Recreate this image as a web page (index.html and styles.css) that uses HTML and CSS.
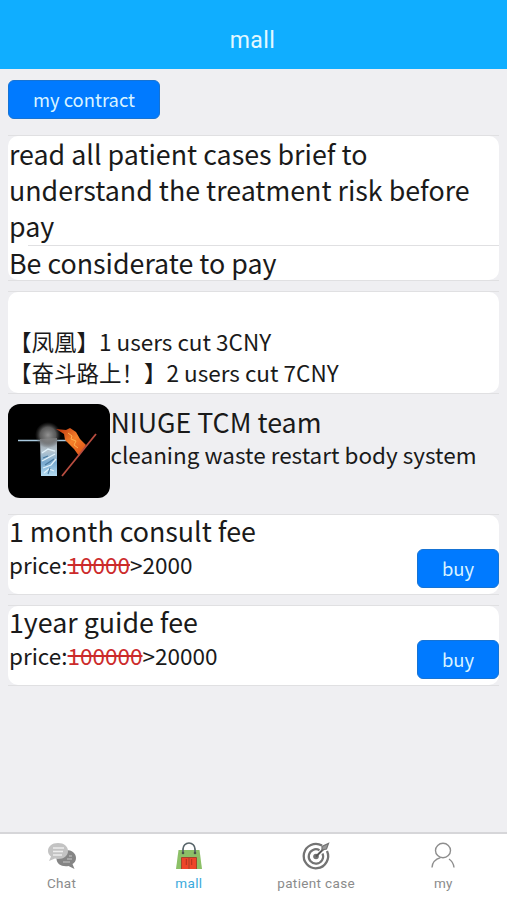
FILE: index.html
```
<!DOCTYPE html>
<html lang="en">
<head>
  <meta charset="UTF-8" />
  <title>mall</title>
  <meta name="viewport" content="width=device-width, initial-scale=1" />
  <link rel="stylesheet" href="styles.css">
</head>
<body>
  <header class="topbar">
    <h1>mall</h1>
  </header>

  <main class="content">
    <button class="btn contract">my contract</button>

    <div class="card">
      <div class="card-body notice">
        <p>read all patient cases brief to understand the treatment risk before pay</p>
        <p class="divided">Be considerate to pay</p>
      </div>
    </div>

    <div class="card">
      <div class="card-body cuts">
        <p>【凤凰】1 users cut 3CNY</p>
        <p>【奋斗路上！】2 users cut 7CNY</p>
      </div>
    </div>

    <div class="team">
      <svg class="logo" viewBox="0 0 102 94">
        <defs>
          <linearGradient id="ice" x1="0" y1="0" x2="0" y2="1">
            <stop offset="0" stop-color="#8b8f94" />
            <stop offset=".35" stop-color="#b5c5d0" />
            <stop offset=".65" stop-color="#78a9cf" />
            <stop offset="1" stop-color="#b5dcf2" />
          </linearGradient>
          <radialGradient id="smoke">
            <stop offset="0" stop-color="#929292" />
            <stop offset=".6" stop-color="#707070" stop-opacity=".8" />
            <stop offset="1" stop-color="#444" stop-opacity="0" />
          </radialGradient>
          <linearGradient id="fire" x1="0" y1="0" x2="1" y2="1">
            <stop offset="0" stop-color="#b92e0c" />
            <stop offset=".5" stop-color="#f6812a" />
            <stop offset="1" stop-color="#dc4a12" />
          </linearGradient>
        </defs>
        <rect width="102" height="94" rx="12" fill="#000" />
        <path d="M10 36.500H61" stroke="#a9c9df" stroke-width="1.600" />
        <path d="M32 35l17-1v38H33z" fill="url(#ice)" />
        <path d="M34 49l6-4 7 2M34 57l13-7M35 64l8-3 5-6M36 69l5-4 5 2" fill="none" stroke="#e1f2fb" stroke-width="1.300" />
        <path d="M35 54l5-2M37 61l9-6M40 70l2-6" stroke="#4a7ba1" stroke-width="1.100" />
        <ellipse cx="40" cy="31" rx="13" ry="13" fill="url(#smoke)" />
        <path d="M48 25l10 1 4-2 6 4 4 7 6 6-7 11-5-7-5-5-4-4-1-6z" fill="url(#fire)" />
        <path d="M60 29l4 3-1 3 5 2-2 4 4 3" fill="none" stroke="#ffb04e" stroke-width="1" />
        <path d="M54 72L88 30" stroke="#b84d40" stroke-width="1.800" />
      </svg>
      <div class="team-info">
        <h2>NIUGE TCM team</h2>
        <p>cleaning waste restart body system</p>
      </div>
    </div>

    <div class="card">
      <div class="card-body product">
        <div>
          <h2>1 month consult fee</h2>
          <p>price:<del>10000</del>&gt;2000</p>
        </div>
        <button class="btn buy">buy</button>
      </div>
    </div>

    <div class="card">
      <div class="card-body product">
        <div>
          <h2>1year guide fee</h2>
          <p>price:<del>100000</del>&gt;20000</p>
        </div>
        <button class="btn buy">buy</button>
      </div>
    </div>
  </main>

  <nav class="tabbar">
    <a class="tab">
      <svg viewBox="0 0 30 30">
        <path d="M19 9c6 0 10 3.500 10 8 0 3-1.500 5-3.500 6l2 5-6-3c-7 1-12-2-12-7.500C9.500 12 13 9 19 9z" fill="#858585" />
        <path d="M11 2c6 0 10 3.500 10 8s-4 8-10 8c-1 0-2-.1-3-.4L2 20l2-4.500C2 14 1 12 1 10c0-4.500 4-8 10-8z" fill="#c3c3c3" />
        <path d="M6 7h11M6 10.500h10M6 14h9" stroke="#ededed" stroke-width="1.300" />
        <path d="M22 15h3M20 18h5M16 21h7" stroke="#c8c8c8" stroke-width="1.200" />
      </svg>
      <span>Chat</span>
    </a>
    <a class="tab active">
      <svg viewBox="0 0 30 30">
        <path d="M4.500 9h21l2.500 19H2z" fill="#8cc067" />
        <path d="M7.500 16.500h15V28h-15z" fill="#ee4529" />
        <path d="M7.500 28V16.500h15V28M15 17v11" fill="none" stroke="#a3452b" stroke-width="1" />
        <path d="M12.300 18v6M17.700 18v6" stroke="#a92f1d" stroke-width=".9" />
        <path d="M9 12V8a6 6 0 0 1 12 0v4" fill="none" stroke="#58656a" stroke-width="1.700" />
        <circle cx="9" cy="12" r="1.300" fill="#465348" />
        <circle cx="21" cy="12" r="1.300" fill="#465348" />
      </svg>
      <span>mall</span>
    </a>
    <a class="tab">
      <svg viewBox="0 0 30 30" fill="none" stroke="#737373">
        <path d="M21 4.500A12.200 12.200 0 1 0 26 10" stroke-width="2.300" />
        <path d="M18.500 9.200A7.200 7.200 0 1 0 21.500 12.500" stroke-width="2.200" />
        <circle cx="15" cy="15.500" r="2.800" fill="#737373" stroke="none" />
        <path d="M15 15.500L25 5.500" stroke="#555" stroke-width="2" />
        <path d="M21 9V5.500L27.500 2.500 25.500 8z" fill="#999" stroke-width="1.200" />
      </svg>
      <span>patient case</span>
    </a>
    <a class="tab">
      <svg viewBox="0 0 30 30" fill="none" stroke="#8e8e8e" stroke-width="1.400">
        <ellipse cx="15" cy="9.500" rx="7.500" ry="7.200" />
        <path d="M4 26.500c.3-5 3.500-8.300 8.500-9.800M21 18c2.700 1.700 4.500 4.500 5 8.500" />
      </svg>
      <span>my</span>
    </a>
  </nav>
</body>
</html>
```
FILE: styles.css
```
:root {
  --accent: #10aeff;
  --primary: #007aff;
  --bg: #efeff2;
  --line: #e0e0e2;
}

* {
  box-sizing: border-box;
  margin: 0;
  padding: 0;
}

body {
  display: flex;
  flex-direction: column;
  height: 100vh;
  overflow: hidden;
  background: var(--bg);
  color: #1a1a1a;
  font-family: "Noto Sans CJK SC", sans-serif;
}

.topbar {
  height: 69px;
  padding-top: 24px;
  background: var(--accent);
  color: #e3f8ff;
  text-align: center;
}

.topbar h1 {
  padding-right: 2px;
  font-family: Roboto, sans-serif;
  font-size: 23px;
  line-height: 34px;
  font-weight: 400;
  letter-spacing: 0.4px;
}

.content {
  flex: 1;
  padding: 11px 8px 0;
}

.btn {
  height: 39px;
  padding-bottom: 1px;
  border: 1px solid #1673d4;
  border-radius: 6px;
  background: var(--primary);
  color: #d9f3ff;
  font-family: inherit;
  font-size: 18.4px;
  line-height: 36px;
}

.contract {
  display: block;
  width: 152px;
  margin-bottom: 16px;
}

/* hairlines run the full width, only the white body is rounded */
.card {
  margin-bottom: 10px;
  border-top: 1px solid var(--line);
  border-bottom: 1px solid var(--line);
}

.card-body {
  border-radius: 10px;
  background: #fff;
}

.notice {
  height: 144px;
  font-size: 26.8px;
  line-height: 36.2px;
}

.notice p {
  padding: 0 1px;
}

.divided {
  background: linear-gradient(var(--line), var(--line)) 20px 0 / 100% 1px no-repeat;
}

.cuts {
  height: 101px;
  padding: 34px 1px 0;
  font-size: 22.5px;
  line-height: 31px;
}

.team {
  display: flex;
  height: 110px;
}

.logo {
  width: 102px;
  height: 94px;
}

.team-info {
  padding-left: 0.5px;
}

h2 {
  font-size: 26.8px;
  line-height: 36px;
  font-weight: 400;
}

.team-info p,
.product p {
  font-size: 22.5px;
  line-height: 31px;
}

.team-info p {
  margin-top: -1px;
}

.product {
  display: flex;
  justify-content: space-between;
  height: 79px;
  padding-left: 1px;
}

.product h2 {
  margin-top: -2px;
}

.product del {
  color: #cc2b2b;
}

.buy {
  width: 82px;
  margin-top: 34px;
}

.tabbar {
  display: flex;
  height: 68px;
  margin-left: -2px;
  border-top: 2px solid #d6d6d9;
  background: #fff;
}

.tab {
  flex: 1;
  display: flex;
  flex-direction: column;
  align-items: center;
  padding-top: 7px;
  color: #8b8b8b;
  font: 13.5px/20px Roboto, sans-serif;
  letter-spacing: 0.35px;
}

.tab svg {
  width: 30px;
  height: 30px;
  margin-bottom: 2px;
}

.tab.active {
  color: #3ba9dc;
}
```
